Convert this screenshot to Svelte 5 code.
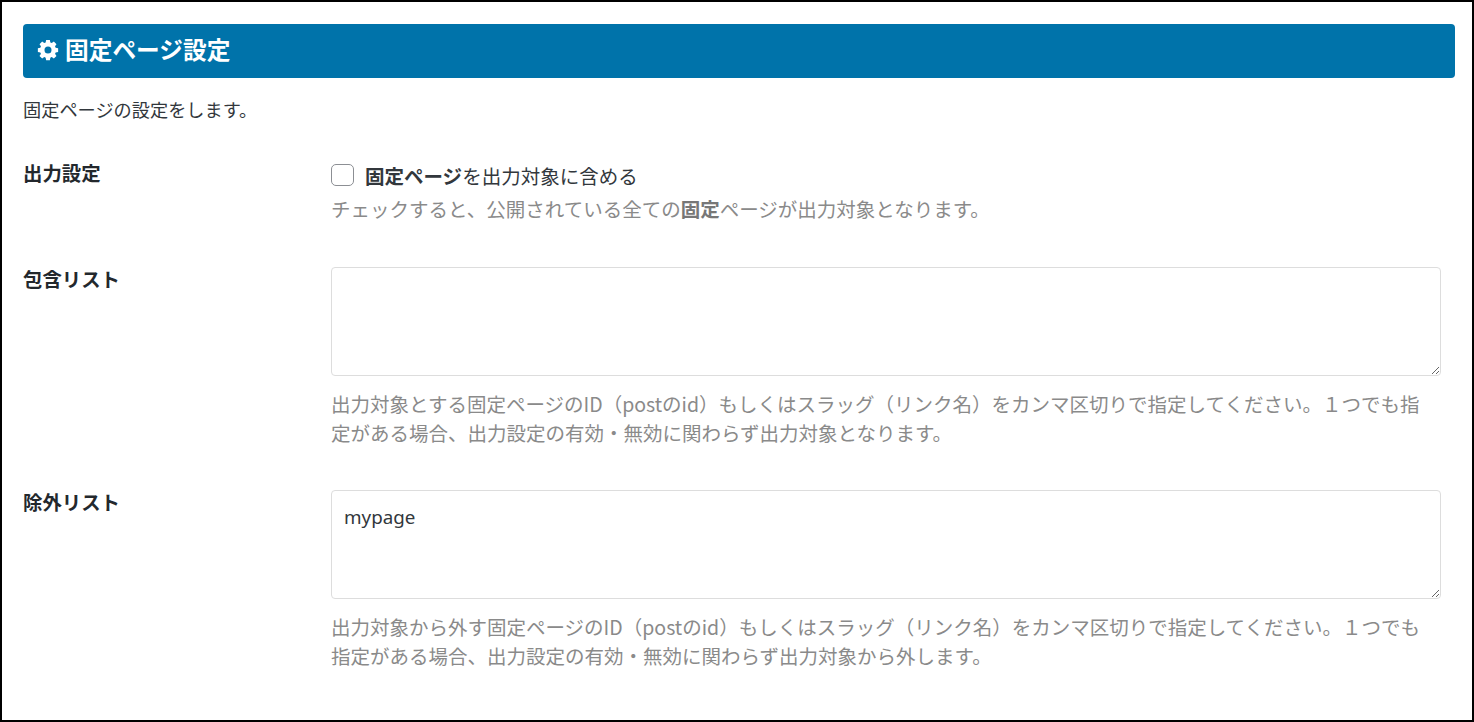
<script lang="ts">
	let includeList = $state('');
	let excludeList = $state('mypage');
	let outputPages = $state(false);
</script>

<div class="frame">
	<section class="panel">
		<h2 class="panelTitle">
			<svg class="gear" viewBox="0 0 24 24" width="22" height="22" aria-hidden="true">
				<path
					fill="currentColor"
					fill-rule="evenodd"
					d="M9.6 1h4.8l.6 3.2c.6.2 1.2.5 1.8.8l2.7-1.9 3.4 3.4-1.9 2.7c.3.6.6 1.2.8 1.8l3.2.6v4.8l-3.2.6c-.2.6-.5 1.2-.8 1.8l1.9 2.7-3.4 3.4-2.7-1.9c-.6.3-1.2.6-1.8.8l-.6 3.2H9.6L9 23.8c-.6-.2-1.2-.5-1.8-.8l-2.7 1.9-3.4-3.4L3 18.8c-.3-.6-.6-1.2-.8-1.8L-1 16.4v-4.8l3.2-.6c.2-.6.5-1.2.8-1.8L1.1 6.5l3.4-3.4L7.2 5c.6-.3 1.2-.6 1.8-.8L9.6 1zM12 9.5a4.5 4.5 0 1 0 0 9 4.5 4.5 0 0 0 0-9z"
					transform="translate(1.8 .2) scale(.85)"
				/>
			</svg>
			固定ページ設定
		</h2>
		<p class="intro">固定ページの設定をします。</p>

		<div class="row first">
			<div class="label">出力設定</div>
			<div class="field">
				<label class="check">
					<input type="checkbox" bind:checked={outputPages} />
					<span><b>固定ページ</b>を出力対象に含める</span>
				</label>
				<p class="hint">チェックすると、公開されている全ての<b>固定</b>ページが出力対象となります。</p>
			</div>
		</div>

		<div class="row second">
			<div class="label">包含リスト</div>
			<div class="field">
				<textarea bind:value={includeList}></textarea>
				<p class="hint">出力対象とする固定ページのID（postのid）もしくはスラッグ（リンク名）をカンマ区切りで指定してください。１つでも指定がある場合、出力設定の有効・無効に関わらず出力対象となります。</p>
			</div>
		</div>

		<div class="row">
			<div class="label">除外リスト</div>
			<div class="field">
				<textarea bind:value={excludeList}></textarea>
				<p class="hint">出力対象から外す固定ページのID（postのid）もしくはスラッグ（リンク名）をカンマ区切りで指定してください。１つでも指定がある場合、出力設定の有効・無効に関わらず出力対象から外します。</p>
			</div>
		</div>
	</section>
</div>

<style>
	:global(body) {
		margin: 0;
		background: #fff;
	}

	.frame {
		box-sizing: border-box;
		width: 1474px;
		height: 722px;
		border: 2px solid #000;
		background: #fff;
		overflow: hidden;
		font-family: "Noto Sans CJK JP", "Liberation Sans", sans-serif;
		color: #32373c;
	}

	.panel {
		padding: 22px 17px 0 21px;
	}

	.panelTitle {
		display: flex;
		align-items: center;
		gap: 6px;
		box-sizing: border-box;
		height: 54px;
		margin: 0;
		padding: 0 14px 5px;
		border-radius: 4px;
		background: #0073aa;
		color: #fff;
		font-size: 23.7px;
		font-weight: 700;
	}

	.gear {
		flex: none;
		margin-top: 2px;
	}

	.intro {
		margin: 18px 0 0;
		font-size: 18.2px;
		line-height: 26px;
	}

	.row {
		display: grid;
		grid-template-columns: 308px 1fr;
		padding-right: 14px;
		margin-top: 43px;
	}

	.row.first {
		margin-top: 39px;
	}

	.row.second {
		margin-top: 44px;
	}

	.label {
		font-size: 19.4px;
		font-weight: 700;
		line-height: 24px;
		color: #23282d;
	}

	.check {
		display: flex;
		align-items: center;
		gap: 11px;
		height: 28px;
		font-size: 19.5px;
	}

	.check input {
		appearance: none;
		box-sizing: border-box;
		width: 23px;
		height: 22px;
		margin: 0;
		border: 1px solid #8c8f94;
		border-radius: 5px;
		background: #fff;
	}

	.check b {
		font-weight: 700;
	}

	.hint {
		max-width: 1096px;
		margin: 5px 0 0;
		font-size: 19.5px;
		line-height: 29px;
		color: #8a8a8a;
	}

	.hint b {
		font-weight: 700;
		color: #777;
	}

	textarea + .hint {
		margin-top: 13px;
	}

	textarea {
		display: block;
		box-sizing: border-box;
		width: 100%;
		height: 109px;
		padding: 10px 12px;
		border: 1px solid #ddd;
		border-radius: 4px;
		outline: none;
		background: #fff;
		font-family: "Noto Sans", "Liberation Sans", sans-serif;
		font-size: 18.8px;
		line-height: 32px;
		color: #32373c;
	}
</style>
